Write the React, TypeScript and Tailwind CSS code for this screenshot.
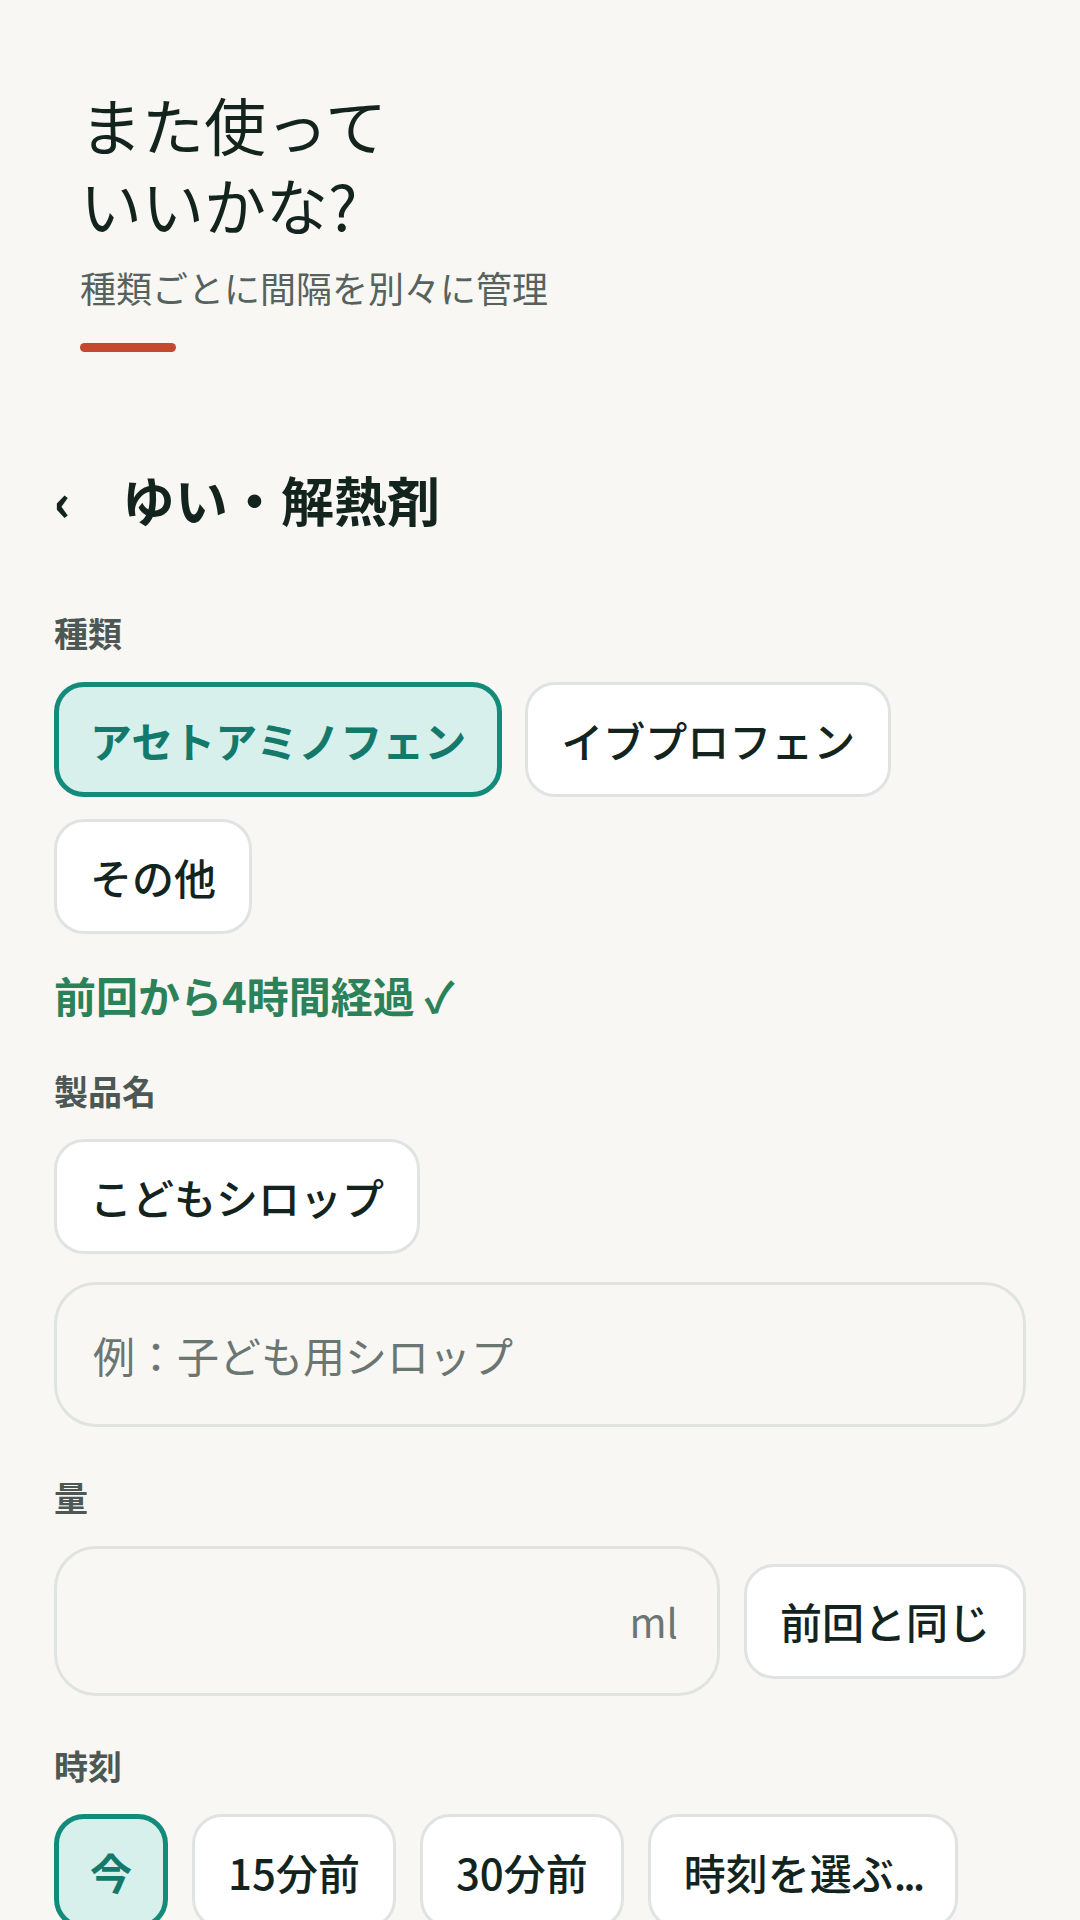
import React from 'react';

const font = { fontFamily: '"Noto Sans CJK JP", "Noto Sans", sans-serif' };

interface ChipProps {
  label: React.ReactNode;
  active?: boolean;
}

const Chip: React.FC<ChipProps> = ({ label, active }) => {
  if (active) {
    return (
      <button className="h-[115px] px-[31px] rounded-[30px] border-[5px] border-[#138b7b] bg-[#d8f0eb] text-[#137a6b] text-[42px] leading-[60px] font-bold flex items-center">
        {label}
      </button>
    );
  }
  return (
    <button className="h-[115px] px-[33px] rounded-[30px] border-[3px] border-[#dfe4e2] bg-white text-[#13241f] text-[42px] leading-[60px] font-medium flex items-center">
      {label}
    </button>
  );
};

const Label: React.FC<{ text: string; className?: string }> = ({ text, className }) => (
  <div className={`text-[34px] leading-[51px] font-bold text-[#4d5753] ${className ?? ''}`}>{text}</div>
);

export default function App() {
  return (
    <div className="min-h-screen bg-[#f8f7f3] text-[#13241f] overflow-hidden" style={font}>
      {/* header */}
      <header className="pl-[80px] pt-[84px]">
        <h1 className="text-[62px] leading-[80px] font-normal text-[#13241f]">
          また使って
          <br />
          いいかな?
        </h1>
        <p className="mt-[16px] text-[36px] leading-[54px] text-[#56625e]">種類ごとに間隔を別々に管理</p>
        <div className="mt-[29px] w-[96px] h-[9px] rounded-full bg-[#c4492f]" />
      </header>

      <main className="px-[54px]">
        <div className="mt-[107px] flex items-center h-[80px]">
          <span className="w-[68px] text-[50px] leading-[80px] font-black text-[#13241f]">‹</span>
          <h2 className="text-[53px] leading-[80px] font-bold text-[#13241f]">ゆい・解熱剤</h2>
        </div>

        <Label text="種類" className="mt-[68px]" />
        <div className="mt-[24px] flex flex-wrap gap-x-[23px] gap-y-[22px]">
          <Chip label="アセトアミノフェン" active />
          <Chip label="イブプロフェン" />
          <Chip label="その他" />
        </div>

        <div className="mt-[31px] text-[42px] leading-[60px] font-bold text-[#2b8158]">前回から4時間経過 ✓</div>

        <Label text="製品名" className="mt-[40px]" />
        <div className="mt-[23px] flex">
          <Chip label="こどもシロップ" />
        </div>
        <div className="mt-[28px] h-[145px] rounded-[42px] border-[3px] border-[#dfe4e2] px-[36px] flex items-center">
          <span className="text-[42px] leading-[60px] text-[#6b7571]">例：子ども用シロップ</span>
        </div>

        <Label text="量" className="mt-[44px]" />
        <div className="mt-[24px] flex items-center gap-[24px]">
          <div className="flex-1 h-[150px] rounded-[42px] border-[3px] border-[#dfe4e2] px-[39px] flex items-center justify-end">
            <span className="text-[40px] leading-[60px] text-[#6b7571]">ml</span>
          </div>
          <Chip label="前回と同じ" />
        </div>

        <Label text="時刻" className="mt-[44px]" />
        <div className="mt-[23px] flex gap-[24px]">
          <Chip label="今" active />
          <Chip label="15分前" />
          <Chip label="30分前" />
          <Chip
            label={
              <>
                時刻を選ぶ<span className="tracking-[-3px]">...</span>
              </>
            }
          />
        </div>
        <div className="h-[60px]" />
      </main>
    </div>
  );
}
